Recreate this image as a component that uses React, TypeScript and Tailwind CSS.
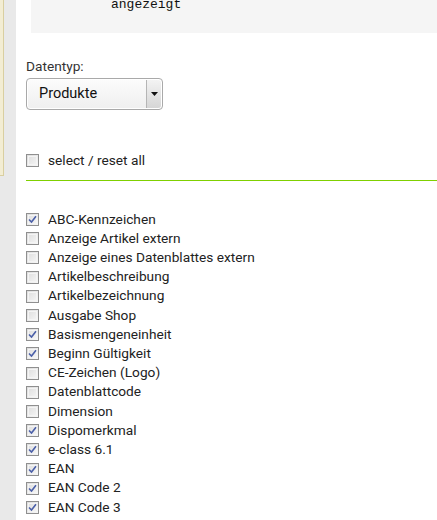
import React from 'react';

const fields: [string, boolean][] = [
  ['ABC-Kennzeichen', true],
  ['Anzeige Artikel extern', false],
  ['Anzeige eines Datenblattes extern', false],
  ['Artikelbeschreibung', false],
  ['Artikelbezeichnung', false],
  ['Ausgabe Shop', false],
  ['Basismengeneinheit', true],
  ['Beginn Gültigkeit', true],
  ['CE-Zeichen (Logo)', false],
  ['Datenblattcode', false],
  ['Dimension', false],
  ['Dispomerkmal', true],
  ['e-class 6.1', true],
  ['EAN', true],
  ['EAN Code 2', true],
  ['EAN Code 3', true],
];

function Box({ checked }: { checked: boolean }) {
  return (
    <span className="relative flex h-[13px] w-[13px] shrink-0 items-center justify-center border border-[#8f8f8f] bg-gradient-to-br from-[#dcdcdc] to-[#f7f7f7]">
      <span className="absolute inset-[1px] border border-[#f4f4f4]" />
      {checked && (
        <svg width="9" height="9" viewBox="0 0 9 9" className="relative">
          <path d="M1 4.5 L3.5 7 L8 1.2" fill="none" stroke="#4a5fa8" strokeWidth="1.6" />
        </svg>
      )}
    </span>
  );
}

export default function App() {
  return (
    <div className="flex h-[520px] w-[437px] overflow-hidden bg-white font-['Roboto',sans-serif] text-[13.7px] leading-[16px] text-[#222]">
      {/* left rail */}
      <div className="w-[16px] shrink-0 bg-[#e9e9e9]">
        <div className="h-[176px] w-[4px] border-r border-b border-[#d9cfa0] bg-[#f3edd3]" />
      </div>

      <div className="flex flex-1 flex-col pl-[10px]">
        <div className="ml-[5px] h-[33px] shrink-0 bg-[#f5f5f5] pl-[80px] font-['Liberation_Mono',monospace] text-[13px] leading-[10px] text-[#111]">
          angezeigt
        </div>

        <div className="mt-[25px] h-[16px] text-[#333]">Datentyp:</div>
        <div className="mt-[4px] flex h-[32px] w-[137px] shrink-0 items-stretch rounded-[4px] border border-[#a9a9a9] bg-gradient-to-b from-[#fcfcfc] to-[#efefef] shadow-[inset_0_0_0_1px_#fff]">
          <span className="flex flex-1 items-center pl-[12px] text-[14.5px] text-[#111]">Produkte</span>
          <span className="my-[1px] mr-[1px] flex w-[15px] items-center justify-center rounded-r-[3px] border-l border-[#b5b5b5] bg-gradient-to-b from-[#f3f3f3] to-[#d6d6d6]">
            <svg width="7" height="4" viewBox="0 0 7 4">
              <path d="M0 0 H7 L3.5 4 Z" fill="#111" />
            </svg>
          </span>
        </div>

        <div className="mt-[43px] flex h-[14px] items-center gap-[9px]">
          <Box checked={false} />
          <span>select / reset all</span>
        </div>
        <div className="mt-[13px] h-px shrink-0 bg-[#7fd000]" />

        <div className="mt-[29px] flex flex-col">
          {fields.map(([label, checked]) => (
            <label key={label} className="flex h-[19.2px] items-center gap-[9px]">
              <Box checked={checked} />
              <span className="leading-none">{label}</span>
            </label>
          ))}
        </div>
      </div>
    </div>
  );
}
